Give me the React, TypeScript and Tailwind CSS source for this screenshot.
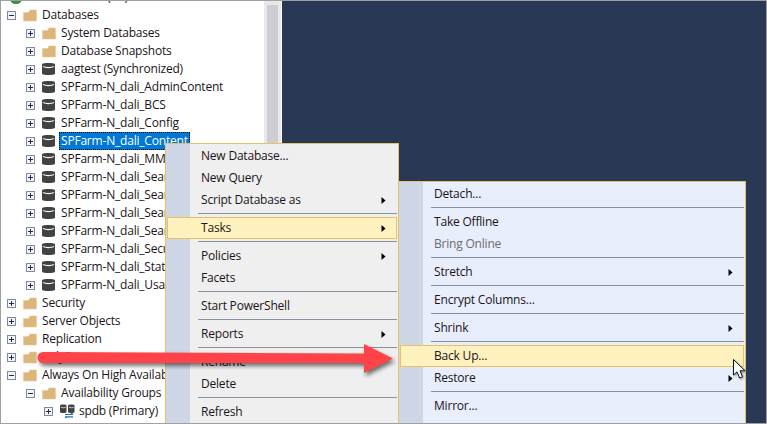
const font = { fontFamily: '"Open Sans", "Noto Sans", sans-serif' };

type TreeRow = {
  label: string;
  level: number;
  icon: "folder" | "db" | "group";
  open?: boolean;
  selected?: boolean;
};

const treeRows: TreeRow[] = [
  { label: "Databases", level: 0, icon: "folder", open: true },
  { label: "System Databases", level: 1, icon: "folder" },
  { label: "Database Snapshots", level: 1, icon: "folder" },
  { label: "aagtest (Synchronized)", level: 1, icon: "db" },
  { label: "SPFarm-N_dali_AdminContent", level: 1, icon: "db" },
  { label: "SPFarm-N_dali_BCS", level: 1, icon: "db" },
  { label: "SPFarm-N_dali_Config", level: 1, icon: "db" },
  { label: "SPFarm-N_dali_Content", level: 1, icon: "db", selected: true },
  { label: "SPFarm-N_dali_MMS", level: 1, icon: "db" },
  { label: "SPFarm-N_dali_Search1", level: 1, icon: "db" },
  { label: "SPFarm-N_dali_Search2", level: 1, icon: "db" },
  { label: "SPFarm-N_dali_Search3", level: 1, icon: "db" },
  { label: "SPFarm-N_dali_Search4", level: 1, icon: "db" },
  { label: "SPFarm-N_dali_Secure", level: 1, icon: "db" },
  { label: "SPFarm-N_dali_State", level: 1, icon: "db" },
  { label: "SPFarm-N_dali_Usage", level: 1, icon: "db" },
  { label: "Security", level: 0, icon: "folder" },
  { label: "Server Objects", level: 0, icon: "folder" },
  { label: "Replication", level: 0, icon: "folder" },
  { label: "PolyBase", level: 0, icon: "folder" },
  { label: "Always On High Availability", level: 0, icon: "folder", open: true },
  { label: "Availability Groups", level: 1, icon: "folder", open: true },
  { label: "spdb (Primary)", level: 2, icon: "group" },
];

const Expander = ({ open }: { open?: boolean }) => (
  <svg width="9" height="9" viewBox="0 0 9 9" className="shrink-0">
    <rect x="0.5" y="0.5" width="8" height="8" fill="#f4f4f6" stroke="#7d8a9c" />
    <path d="M2 4.5h5" stroke="#1e2a52" />
    {!open && <path d="M4.5 2v5" stroke="#1e2a52" />}
  </svg>
);

const FolderIcon = () => (
  <svg width="14" height="13" viewBox="0 0 14 13" className="shrink-0">
    <path d="M0.5 3.5V12H13.5V1H7L5.5 3.5Z" fill="#dcb67a" stroke="#e6cb9f" strokeWidth="0.6" />
  </svg>
);

const DbIcon = () => (
  <svg width="13" height="14" viewBox="0 0 13 14" className="shrink-0">
    <path d="M0 2.5C0 .6 13 .6 13 2.5V11.5C13 13.6 0 13.6 0 11.5Z" fill="#424242" />
    <path d="M1 4.4C3 6 10 6 12 4.4" fill="none" stroke="#f2f2f2" strokeWidth="1.1" />
  </svg>
);

const GroupIcon = () => (
  <svg width="15" height="14" viewBox="0 0 15 14" className="shrink-0">
    <path d="M0 1.5C0 .2 6.5 .2 6.5 1.5V8C6.5 9.3 0 9.3 0 8Z" fill="#424242" />
    <path d="M8 1.5C8 .2 14.5 .2 14.5 1.5V8C14.5 9.3 8 9.3 8 8Z" fill="#424242" />
    <path d="M.8 3C2 4 5 4 5.8 3M8.8 3C10 4 13 4 13.8 3" fill="none" stroke="#eee" strokeWidth="0.8" />
    <path d="M5 10.5h8M11 9l2 1.5M5 12.8h8M7 14.3l-2-1.5" fill="none" stroke="#1f72b8" strokeWidth="1.2" />
  </svg>
);

const Row = ({ row }: { row: TreeRow }) => {
  const indent = row.level === 0 ? "pl-[6px]" : row.level === 1 ? "pl-[25px]" : "pl-[43px]";
  return (
    <div className={`flex h-[18px] items-center whitespace-nowrap ${indent}`}>
      <Expander open={row.open} />
      <div className="ml-[7px] flex w-[14px] shrink-0 justify-start">
        {row.icon === "folder" && <FolderIcon />}
        {row.icon === "db" && <DbIcon />}
        {row.icon === "group" && <GroupIcon />}
      </div>
      <span
        className={
          row.selected
            ? "ml-[3px] flex h-[18px] items-center border border-dotted border-black bg-[#0078d7] px-[1px] text-white"
            : "ml-[5px]"
        }
      >
        {row.label}
      </span>
    </div>
  );
};

type Item =
  | { sep: true }
  | { label: string; arrow?: boolean; active?: boolean; disabled?: boolean; sep?: false };

const contextItems: Item[] = [
  { label: "New Database..." },
  { label: "New Query" },
  { label: "Script Database as", arrow: true },
  { sep: true },
  { label: "Tasks", arrow: true, active: true },
  { sep: true },
  { label: "Policies", arrow: true },
  { label: "Facets" },
  { sep: true },
  { label: "Start PowerShell" },
  { sep: true },
  { label: "Reports", arrow: true },
  { sep: true },
  { label: "Rename" },
  { label: "Delete" },
  { sep: true },
  { label: "Refresh" },
];

const taskItems: Item[] = [
  { label: "Detach..." },
  { sep: true },
  { label: "Take Offline" },
  { label: "Bring Online", disabled: true },
  { sep: true },
  { label: "Stretch", arrow: true },
  { sep: true },
  { label: "Encrypt Columns..." },
  { sep: true },
  { label: "Shrink", arrow: true },
  { sep: true },
  { label: "Back Up...", active: true },
  { label: "Restore", arrow: true },
  { sep: true },
  { label: "Mirror..." },
];

const Menu = ({ items, className }: { items: Item[]; className: string }) => (
  <div className={`absolute border border-b-0 border-[#e5c365] pt-[1px] pr-[1px] pl-[1px] ${className}`}>
    <div className="absolute top-0 bottom-0 left-0 w-[24px] bg-[#cfd6e5]" />
    <div className="relative">
      {items.map((item, i) =>
        item.sep ? (
          <div key={i} className="h-[6px] py-[2px]">
            <div className="ml-[31px] h-[1px] bg-[#8a91a0]" />
          </div>
        ) : (
          <div
            key={i}
            className={`flex h-[22px] items-center justify-between pr-[10px] pl-[33px] ${
              item.active ? "border border-[#e5c365] bg-[#fff2bf]" : "border border-transparent"
            } ${item.disabled ? "text-[#6d6d6d]" : "text-[#1b1420]"}`}
          >
            <span>{item.label}</span>
            {item.arrow && (
              <svg width="5" height="7" viewBox="0 0 5 7">
                <path d="M0.5 0L4.5 3.5L0.5 7Z" fill="#000" />
              </svg>
            )}
          </div>
        ),
      )}
    </div>
  </div>
);

export default function App() {
  return (
    <div
      className="relative flex h-[424px] w-[767px] overflow-hidden border border-[#a0a0a0] text-[12px] tracking-[-0.2px] text-[#1b1420]"
      style={font}
    >
      <div className="w-[263px] shrink-0 overflow-hidden bg-white">
        <div className="-mt-[13px]">
          <div className="flex h-[18px] items-center whitespace-nowrap pl-[9px]">
            <div className="mt-[2px] h-[11px] w-[12px] rounded-full bg-[#3f8f3f]" />
            <span className="ml-[20px]">SPDB01-AG (SA)</span>
          </div>
          {treeRows.map((row) => (
            <Row key={row.label} row={row} />
          ))}
        </div>
      </div>
      <div className="w-[17px] shrink-0 bg-[#e8e8ec] px-[3px] pt-[4px]">
        <div className="h-full bg-[#cdcdd3]" />
      </div>
      <div className="ml-[1px] flex-1 bg-[#293955]" />

      <Menu items={contextItems} className="top-[142px] left-[164px] h-[282px] w-[234px] bg-[#efefef]" />
      <Menu items={taskItems} className="top-[180px] left-[397px] h-[244px] w-[348px] bg-[#e9eefc]" />

      {/* red callout arrow */}
      <svg
        width="370"
        height="50"
        viewBox="0 0 370 50"
        className="absolute top-[331px] left-[29px] drop-shadow-[2px_3px_2px_rgba(0,0,0,0.55)]"
      >
        <path
          d="M13 20 L334 21.5 L334 12 L363 26.5 L334 41 L334 31 L13 31 A5.5 5.5 0 0 1 13 20Z"
          fill="#ff4348"
        />
      </svg>

      {/* mouse pointer */}
      <svg
        width="14"
        height="21"
        viewBox="0 0 14 21"
        className="absolute top-[358px] left-[732px] drop-shadow-[1px_1px_1px_rgba(0,0,0,0.4)]"
      >
        <path d="M0.5 0.5V16L4 12.8L6.6 19L9.5 17.8L7 11.8H12Z" fill="#fff" stroke="#111" />
      </svg>
    </div>
  );
}
